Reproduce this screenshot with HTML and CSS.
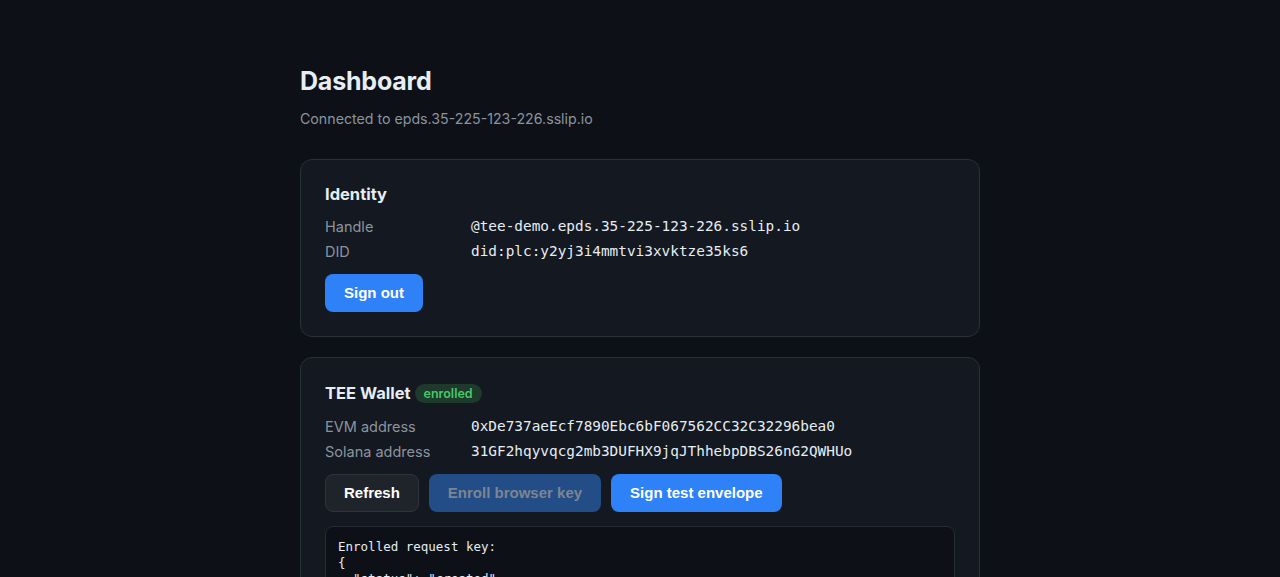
FILE: index.html
```html
<!DOCTYPE html>
<html lang="en">
<head>
<meta charset="utf-8">
<title>Dashboard</title>
<link rel="stylesheet" href="styles.css">
</head>
<body>
<main class="page">
  <header class="header">
    <h1 class="title">Dashboard</h1>
    <p class="subtitle">Connected to epds.35-225-123-226.sslip.io</p>
  </header>

  <section class="card">
    <h2 class="card-title">Identity</h2>
    <dl class="rows">
      <dt>Handle</dt><dd>@tee-demo.epds.35-225-123-226.sslip.io</dd>
      <dt>DID</dt><dd>did:plc:y2yj3i4mmtvi3xvktze35ks6</dd>
    </dl>
    <div class="actions">
      <button class="btn btn-primary">Sign out</button>
    </div>
  </section>

  <section class="card">
    <h2 class="card-title">TEE Wallet <span class="badge">enrolled</span></h2>
    <dl class="rows">
      <dt>EVM address</dt><dd>0xDe737aeEcf7890Ebc6bF067562CC32C32296bea0</dd>
      <dt>Solana address</dt><dd>31GF2hqyvqcg2mb3DUFHX9jqJThhebpDBS26nG2QWHUo</dd>
    </dl>
    <div class="actions">
      <button class="btn btn-secondary">Refresh</button>
      <button class="btn btn-primary btn-disabled" disabled>Enroll browser key</button>
      <button class="btn btn-primary">Sign test envelope</button>
    </div>
    <pre class="output">Enrolled request key:
{
  "status": "created",
  "keyId": "browser-key-1"
}</pre>
  </section>
</main>
</body>
</html>
```
FILE: styles.css
```css
html, body {
  margin: 0;
  padding: 0;
  background: #0d1117;
  color: #e6edf3;
  font-family: Inter, "Liberation Sans", sans-serif;
}

.page {
  width: 680px;
  margin: 0 auto;
  padding: 64px 0 40px;
}

.header {
  margin-bottom: 30px;
}

.title {
  margin: 0;
  font-size: 25px;
  font-weight: 700;
  line-height: 34px;
  letter-spacing: -0.2px;
}

.subtitle {
  margin: 11px 0 0;
  font-size: 14.2px;
  line-height: 20px;
  color: #8b949e;
}

.card {
  background: #131821;
  border: 1px solid #2a3038;
  border-radius: 12px;
  padding: 24px;
}

.card + .card {
  margin-top: 20px;
}

.card-title {
  margin: 0 0 10px;
  font-size: 16.5px;
  font-weight: 700;
  line-height: 20px;
  display: flex;
  align-items: center;
  gap: 4px;
}

.badge {
  display: inline-block;
  margin: 1.5px 0;
  background: #1d3a2b;
  color: #46c86a;
  font-size: 12.5px;
  font-weight: 600;
  line-height: 19px;
  padding: 0 9px;
  border-radius: 10px;
}

.rows {
  margin: 0;
  display: grid;
  grid-template-columns: 146px 1fr;
}

.rows dt {
  font-size: 14.5px;
  color: #8b949e;
  line-height: 25px;
}

.rows dd {
  margin: 0;
  font-family: "DejaVu Sans Mono", "Liberation Mono", monospace;
  font-size: 14.4px;
  line-height: 25px;
  color: #e6edf3;
}

.actions {
  margin-top: 10px;
  display: flex;
  gap: 10px;
}

.btn {
  font-family: "Liberation Sans", Arial, sans-serif;
  font-size: 15px;
  font-weight: 700;
  line-height: 20px;
  padding: 8px 18px;
  border-radius: 8px;
  border: 1px solid transparent;
  color: #ffffff;
  cursor: pointer;
}

.btn-primary {
  background: #2f81f7;
}

.btn-secondary {
  background: #1f242b;
  border-color: #2e343c;
}

.btn-disabled {
  background: #224d87;
  color: #7d8590;
  cursor: default;
}

.output {
  margin: 14px 0 0;
  background: #0d1117;
  border: 1px solid #262c34;
  border-radius: 8px;
  padding: 12px 12px 10px;
  font-family: "DejaVu Sans Mono", "Liberation Mono", monospace;
  font-size: 12.5px;
  line-height: 16px;
  color: #e6edf3;
}
```
